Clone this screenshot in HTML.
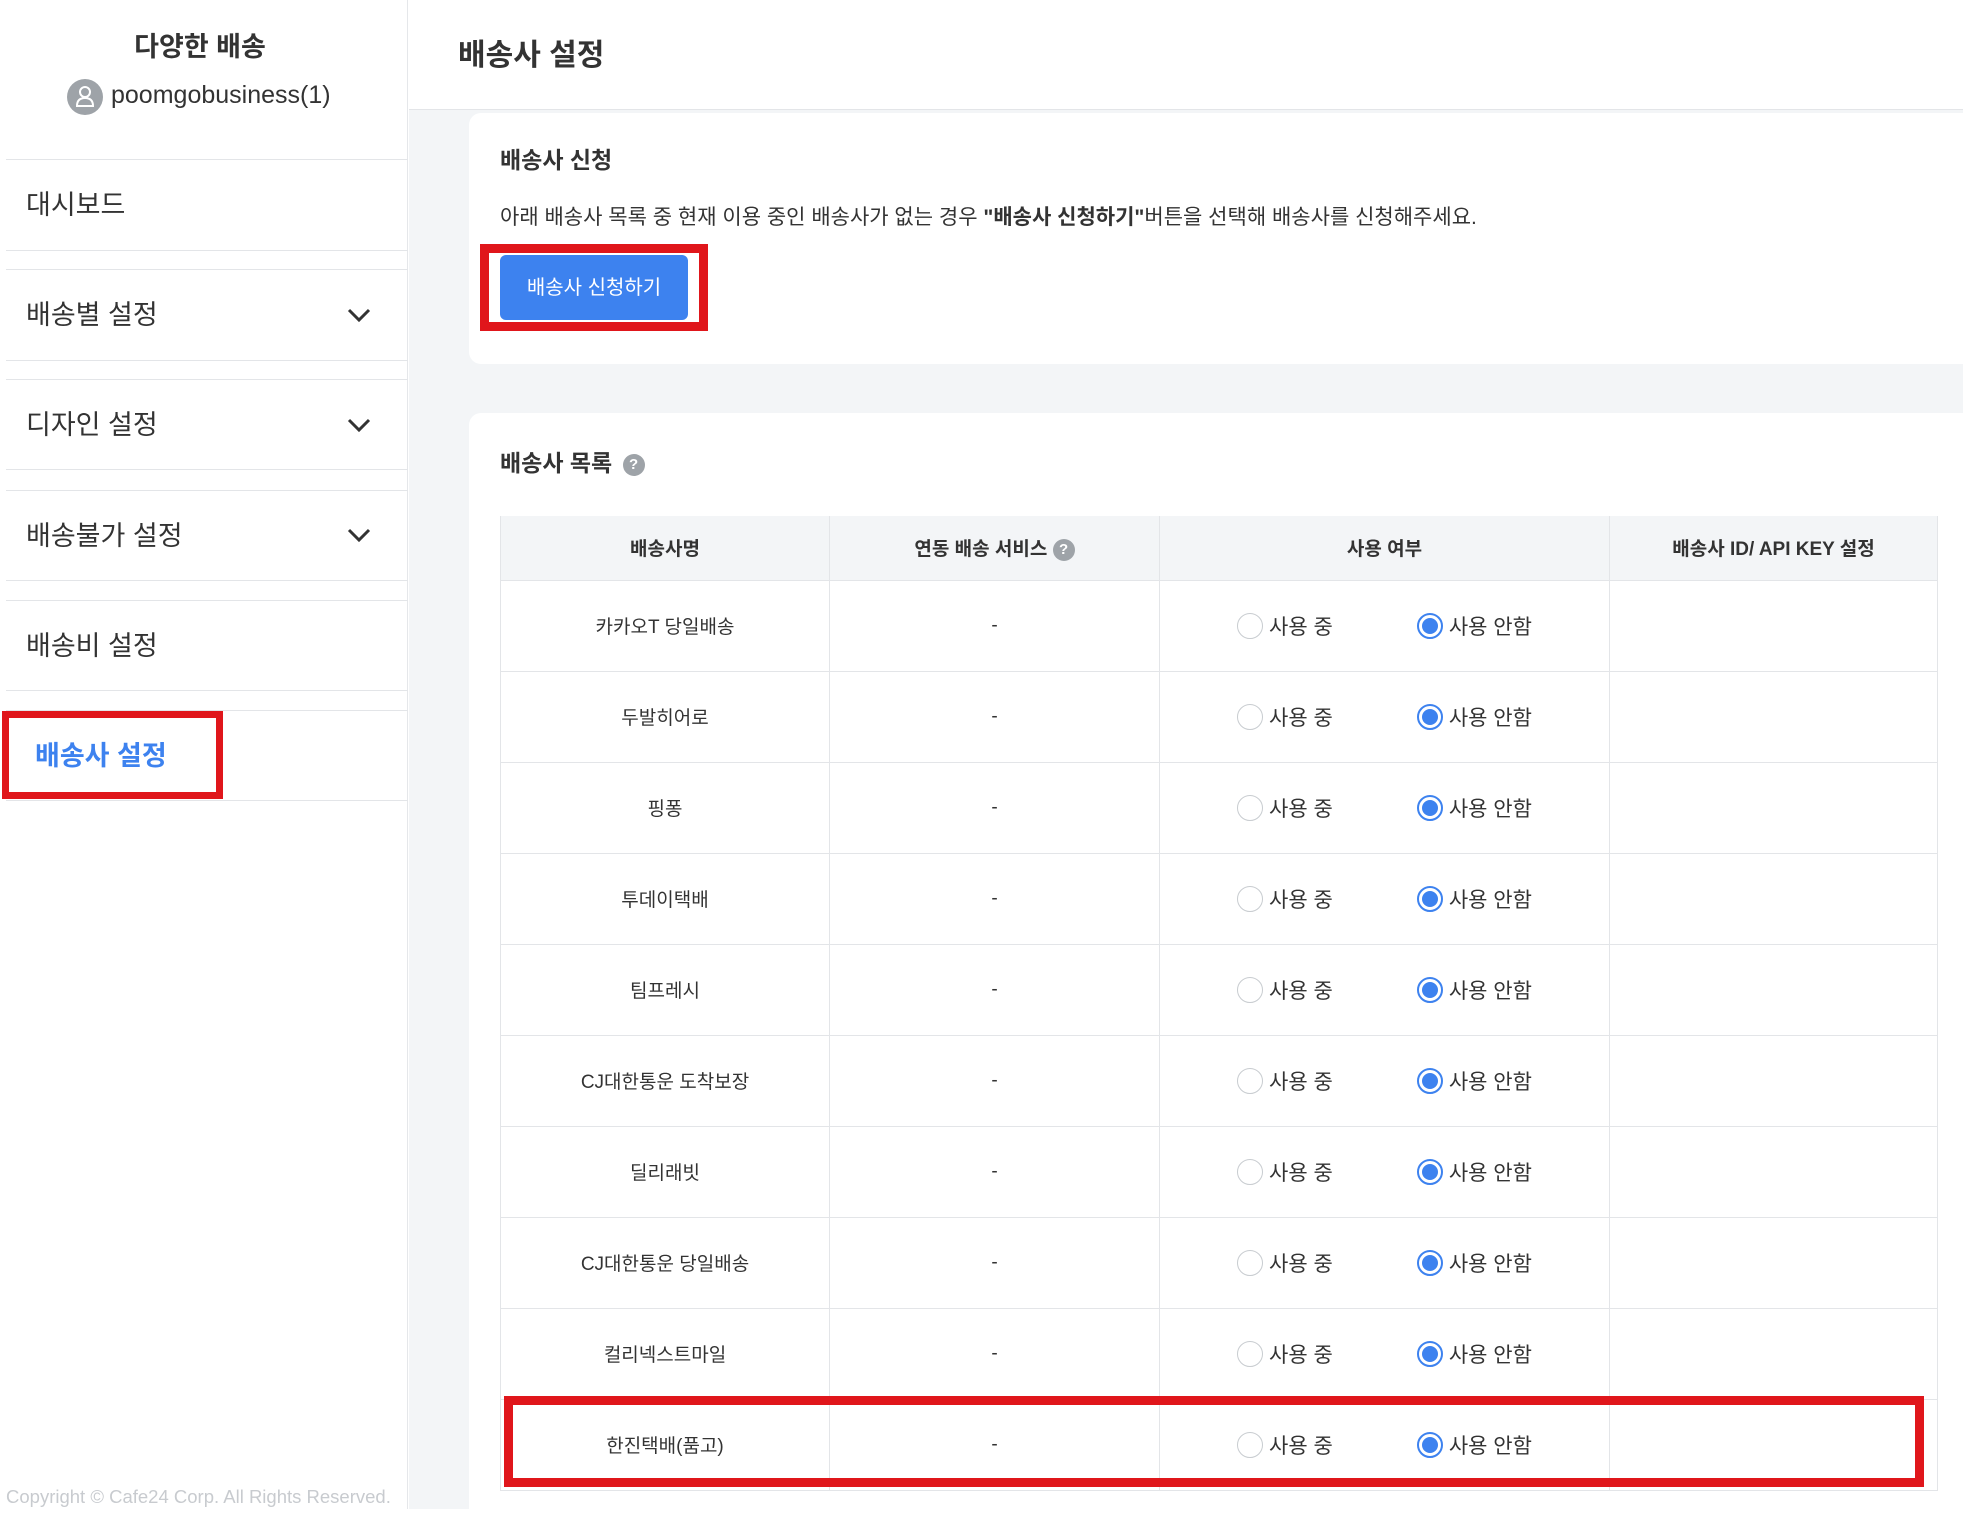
<!DOCTYPE html>
<html><head><meta charset="utf-8"><style>
*{box-sizing:border-box;margin:0;padding:0}
body{width:1963px;height:1509px;overflow:hidden;background:#fff;font-family:"Liberation Sans","Noto Sans CJK KR",sans-serif;color:#333;position:relative}
.abs{position:absolute}
.side{left:0;top:0;width:408px;height:1509px;border-right:1px solid #e5e7ea;background:#fff}
.hl{position:absolute;left:6px;width:402px;height:1px;background:#e3e5e8}
.mi{position:absolute;left:26px;font-size:27px;color:#333;line-height:1}
.chev{position:absolute;left:346px;width:26px;height:16px}
.main{left:409px;top:110px;width:1554px;height:1399px;background:#f3f5f7}
.card{background:#fff;border-radius:12px}
table{border-collapse:collapse;position:absolute;left:500px;top:516px;width:1438px;font-size:19px}
th{background:#f3f5f7;height:64px;font-weight:bold;color:#333;border-left:1px solid #e3e5e8;border-right:1px solid #e3e5e8}
td{height:91px;text-align:center;border:1px solid #e3e5e8;color:#333}
.r{display:inline-block;width:26px;height:26px;border-radius:50%;border:1px solid #c8ccd0;vertical-align:middle;position:relative;margin-right:6px}
.r.on{border:2px solid #3d82ef}
.r.on:after{content:"";position:absolute;left:3px;top:3px;width:16px;height:16px;border-radius:50%;background:#3d82ef}
.q{display:inline-block;width:22px;height:22px;border-radius:50%;background:#9ea3a8;color:#fff;font-size:15px;line-height:22px;text-align:center;font-weight:bold;vertical-align:middle}
.lab{vertical-align:middle;font-size:21px}
</style></head><body>
<div class="abs side">
 <div class="abs" style="left:0;width:400px;top:25px;text-align:center;font-size:27px;font-weight:bold;color:#333">다양한 배송</div>
 <div class="abs" style="left:67px;top:79px;width:36px;height:36px;border-radius:50%;background:#9ea3a8">
  <svg width="36" height="36" viewBox="0 0 36 36"><circle cx="18" cy="13" r="5" fill="none" stroke="#fff" stroke-width="2"/><path d="M10 27 q0-8 8-8 q8 0 8 8z" fill="none" stroke="#fff" stroke-width="2"/></svg></div>
 <div class="abs" style="left:111px;top:81px;font-size:25px;color:#333">poomgobusiness(1)</div>
 <div class="hl" style="top:159px"></div>
 <div class="mi" style="top:192px">대시보드</div>
 <div class="hl" style="top:250px"></div><div class="hl" style="top:269px"></div>
 <div class="mi" style="top:302px">배송별 설정</div>
 <svg class="chev" style="top:307px" viewBox="0 0 26 16"><path d="M3 3 L13 13 L23 3" fill="none" stroke="#333" stroke-width="3"/></svg>
 <div class="hl" style="top:360px"></div><div class="hl" style="top:379px"></div>
 <div class="mi" style="top:412px">디자인 설정</div>
 <svg class="chev" style="top:417px" viewBox="0 0 26 16"><path d="M3 3 L13 13 L23 3" fill="none" stroke="#333" stroke-width="3"/></svg>
 <div class="hl" style="top:469px"></div><div class="hl" style="top:490px"></div>
 <div class="mi" style="top:523px">배송불가 설정</div>
 <svg class="chev" style="top:527px" viewBox="0 0 26 16"><path d="M3 3 L13 13 L23 3" fill="none" stroke="#333" stroke-width="3"/></svg>
 <div class="hl" style="top:580px"></div><div class="hl" style="top:600px"></div>
 <div class="mi" style="top:633px">배송비 설정</div>
 <div class="hl" style="top:690px"></div><div class="hl" style="top:710px"></div>
 <div class="mi" style="top:743px;left:35px;color:#3d82ef;font-weight:bold">배송사 설정</div>
 <div class="hl" style="top:800px"></div>
 <div class="abs" style="left:2px;top:711px;width:221px;height:88px;border:7px solid #e0161b"></div>
 <div class="abs" style="left:6px;top:1486px;font-size:18.5px;color:#c8cbcf">Copyright © Cafe24 Corp. All Rights Reserved.</div>
</div>
<div class="abs" style="left:458px;top:30px;font-size:30px;font-weight:bold;color:#333">배송사 설정</div>
<div class="abs" style="left:409px;top:109px;width:1554px;height:1px;background:#e3e5e8"></div>
<div class="abs main"></div>
<div class="abs card" style="left:469px;top:113px;width:1510px;height:251px"></div>
<div class="abs card" style="left:469px;top:413px;width:1510px;height:1110px"></div>
<div class="abs" style="left:500px;top:141px;font-size:23px;font-weight:bold;color:#333">배송사 신청</div>
<div class="abs" style="left:500px;top:201px;font-size:21px;color:#333">아래 배송사 목록 중 현재 이용 중인 배송사가 없는 경우 <b>"배송사 신청하기"</b>버튼을 선택해 배송사를 신청해주세요.</div>
<div class="abs" style="left:480px;top:244px;width:228px;height:87px;border:9px solid #e0161b"></div>
<div class="abs" style="left:500px;top:255px;width:188px;height:65px;background:#3d82ef;border-radius:6px;color:#fff;font-size:20px;text-align:center;line-height:67px">배송사 신청하기</div>
<div class="abs" style="left:500px;top:444px;font-size:23px;font-weight:bold;color:#333">배송사 목록 <span class="q" style="margin-left:4px">?</span></div>
<table>
<tr><th style="width:329px">배송사명</th><th style="width:330px">연동 배송 서비스 <span class="q">?</span></th><th style="width:450px">사용 여부</th><th>배송사 ID/ API KEY 설정</th></tr>
<tr><td>카카오T 당일배송</td><td>-</td><td><span class="r"></span><span class="lab">사용 중</span><span style="display:inline-block;width:84px"></span><span class="r on"></span><span class="lab">사용 안함</span></td><td></td></tr>
<tr><td>두발히어로</td><td>-</td><td><span class="r"></span><span class="lab">사용 중</span><span style="display:inline-block;width:84px"></span><span class="r on"></span><span class="lab">사용 안함</span></td><td></td></tr>
<tr><td>핑퐁</td><td>-</td><td><span class="r"></span><span class="lab">사용 중</span><span style="display:inline-block;width:84px"></span><span class="r on"></span><span class="lab">사용 안함</span></td><td></td></tr>
<tr><td>투데이택배</td><td>-</td><td><span class="r"></span><span class="lab">사용 중</span><span style="display:inline-block;width:84px"></span><span class="r on"></span><span class="lab">사용 안함</span></td><td></td></tr>
<tr><td>팀프레시</td><td>-</td><td><span class="r"></span><span class="lab">사용 중</span><span style="display:inline-block;width:84px"></span><span class="r on"></span><span class="lab">사용 안함</span></td><td></td></tr>
<tr><td>CJ대한통운 도착보장</td><td>-</td><td><span class="r"></span><span class="lab">사용 중</span><span style="display:inline-block;width:84px"></span><span class="r on"></span><span class="lab">사용 안함</span></td><td></td></tr>
<tr><td>딜리래빗</td><td>-</td><td><span class="r"></span><span class="lab">사용 중</span><span style="display:inline-block;width:84px"></span><span class="r on"></span><span class="lab">사용 안함</span></td><td></td></tr>
<tr><td>CJ대한통운 당일배송</td><td>-</td><td><span class="r"></span><span class="lab">사용 중</span><span style="display:inline-block;width:84px"></span><span class="r on"></span><span class="lab">사용 안함</span></td><td></td></tr>
<tr><td>컬리넥스트마일</td><td>-</td><td><span class="r"></span><span class="lab">사용 중</span><span style="display:inline-block;width:84px"></span><span class="r on"></span><span class="lab">사용 안함</span></td><td></td></tr>
<tr><td>한진택배(품고)</td><td>-</td><td><span class="r"></span><span class="lab">사용 중</span><span style="display:inline-block;width:84px"></span><span class="r on"></span><span class="lab">사용 안함</span></td><td></td></tr>
</table>
<div class="abs" style="left:504px;top:1396px;width:1420px;height:91px;border:9px solid #e0161b"></div>
</body></html>
